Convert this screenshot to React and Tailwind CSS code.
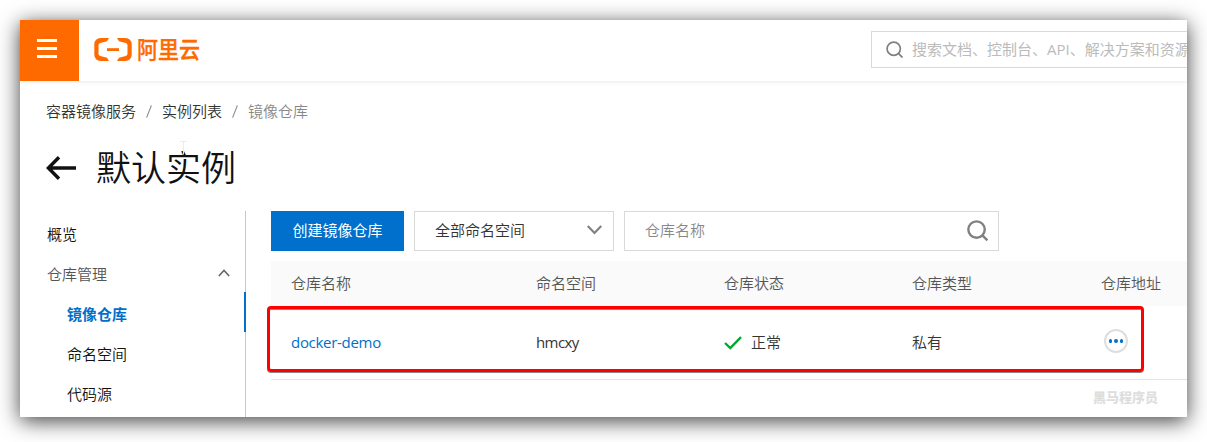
const Burger = () => (
  <svg width="20" height="19" viewBox="0 0 20 19" fill="#fff" shapeRendering="crispEdges">
    <rect width="20" height="3" />
    <rect y="8" width="20" height="3" />
    <rect y="16" width="20" height="3" />
  </svg>
);

const Logo = () => (
  <svg width="38" height="23" viewBox="0 0 38 23" fill="#ff6a00">
    <path d="M15 0H6.5A6.2 6.2 0 0 0 0.3 6.2V16.8A6.2 6.2 0 0 0 6.5 23H15L13 19.8L6.3 18A2.4 2.4 0 0 1 4.5 15.7V7.3A2.4 2.4 0 0 1 6.3 5L13 3.2Z" />
    <path d="M23 0H31.5A6.2 6.2 0 0 1 37.7 6.2V16.8A6.2 6.2 0 0 1 31.5 23H23L25 19.8L31.7 18A2.4 2.4 0 0 0 33.5 15.7V7.3A2.4 2.4 0 0 0 31.7 5L25 3.2Z" />
    <rect x="13" y="10.2" width="12" height="2.8" />
  </svg>
);

const Search = ({ className, w }) => (
  <svg className={className} viewBox="0 0 22 22" fill="none" stroke="#808080" strokeWidth={w}>
    <circle cx="10" cy="10" r="8.6" />
    <path d="M15.6 15.6L21.4 21.4" />
  </svg>
);

const Slash = () => (
  <span className="flex w-[26px] justify-center">
    <svg width="6" height="13" viewBox="0 0 6 13" stroke="#888" strokeWidth="1.1">
      <path d="M0.6 12.6L5.4 0.4" />
    </svg>
  </span>
);

const Side = ({ children, className }) => (
  <div className={`flex h-10 items-center pt-1 ${className}`}>{children}</div>
);

const cols = "grid grid-cols-[245px_188px_188px_189px_1fr] pl-5";

export default function App() {
  return (
    <div className="h-[442px] overflow-hidden bg-white p-5 font-['Open_Sans','Noto_Sans_CJK_SC',sans-serif] text-[15px] font-[350] text-[#333]">
      <div className="flex h-[397px] w-[1167px] flex-col bg-white shadow-[0_4px_20px_rgba(0,0,0,0.75)]">
        <header className="flex h-[61px] shrink-0 items-center overflow-hidden shadow-[0_1px_4px_rgba(0,0,0,0.09)]">
          <div className="flex h-[61px] w-[59px] items-center justify-center bg-[#ff6a00] pb-1 pr-[5px]">
            <Burger />
          </div>
          <div className="ml-[15px] flex items-center gap-[5px] pb-[3px]">
            <Logo />
            <span className="scale-y-110 text-[21px] font-medium leading-[23px] text-[#ff6a00] [-webkit-text-stroke:0.3px_#ff6a00]">阿里云</span>
          </div>
          <div className="mb-0.5 ml-auto flex h-[37px] w-[316px] shrink-0 items-center overflow-hidden whitespace-nowrap border border-r-0 border-[#d9d9d9] pl-3.5 font-normal text-[#bbb]">
            <Search className="mr-[9px] size-[17px] shrink-0" w={2.2} />
            搜索文档、控制台、API、解决方案和资源
          </div>
        </header>

        <nav className="ml-[26px] mt-[19px] flex h-[22px] shrink-0 items-center">
          <span>容器镜像服务</span>
          <Slash />
          <span>实例列表</span>
          <Slash />
          <span className="text-[#888]">镜像仓库</span>
        </nav>

        <div className="relative ml-[26px] mt-[21px] flex h-[50px] shrink-0 items-center text-[#111]">
          <svg className="mr-5" width="30" height="24" viewBox="0 0 30 24" fill="none" stroke="#111" strokeWidth="3.4">
            <path d="M2 12H30M13 1.2L2.4 12L13 22.8" />
          </svg>
          <h1 className="text-[35px] leading-[50px]">默认实例</h1>
          <svg className="absolute left-[134px] top-[-2px]" width="7" height="14" viewBox="0 0 7 14" fill="none" stroke="#ececec">
            <path d="M0 0.5H7M3.5 0.5V13.5" />
          </svg>
        </div>

        <div className="mt-[18px] flex min-h-0 flex-1">
          <aside className="w-[226px] shrink-0 border-r border-[#c8c8c8] pt-px text-[#111]">
            <Side className="pl-[27px]">概览</Side>
            <Side className="justify-between pl-[27px] pr-[15px] text-[#555]">
              仓库管理
              <svg className="mb-0.5" width="12" height="8" viewBox="0 0 12 8" fill="none" stroke="#666" strokeWidth="1.6">
                <path d="M0.8 7L6 1.4L11.2 7" />
              </svg>
            </Side>
            <Side className="-mr-px border-r-2 border-[#0070cc] pl-[47px] font-bold text-[#0070cc]">镜像仓库</Side>
            <Side className="pl-[47px]">命名空间</Side>
            <Side className="pl-[47px]">代码源</Side>
          </aside>

          <main className="ml-[25px] min-w-0 flex-1">
            <div className="flex h-10 gap-2.5">
              <button className="w-[133px] bg-[#0070cc] pb-0.5 font-normal text-white">创建镜像仓库</button>
              <div className="flex w-[200px] items-center justify-between border border-[#d9d9d9] pb-0.5 pl-5 pr-[11px]">
                全部命名空间
                <svg width="15" height="10" viewBox="0 0 15 10" fill="none" stroke="#808080" strokeWidth="2.2">
                  <path d="M0.7 1L7.5 8L14.3 1" />
                </svg>
              </div>
              <div className="flex w-[375px] items-center justify-between border border-[#d9d9d9] pb-0.5 pl-5 pr-2.5 text-[#888]">
                仓库名称
                <Search className="size-[21px]" w={2.5} />
              </div>
            </div>

            <div className={`mt-2.5 h-[45px] items-center bg-[#fafafa] text-[#555] ${cols}`}>
              <span>仓库名称</span>
              <span>命名空间</span>
              <span>仓库状态</span>
              <span>仓库类型</span>
              <span>仓库地址</span>
            </div>

            <div className={`relative h-[74px] items-center border-b border-[#e5e5e5] ${cols}`}>
              <span className="font-normal tracking-[-0.3px] text-[#0070cc]">docker-demo</span>
              <span className="font-normal tracking-[-0.6px]">hmcxy</span>
              <span className="flex items-center">
                <svg className="mr-[9px]" width="18" height="14" viewBox="0 0 18 14" fill="none" stroke="#00a82d" strokeWidth="2.4">
                  <path d="M1 7L6.3 12L17 1.2" />
                </svg>
                正常
              </span>
              <span>私有</span>
              <span className="mb-[3px] ml-[3px] flex size-6 items-center justify-center gap-0.5 rounded-full border-2 border-[#dedede]">
                <i className="size-[3.6px] rounded-full bg-[#0070cc]" />
                <i className="size-[3.6px] rounded-full bg-[#0070cc]" />
                <i className="size-[3.6px] rounded-full bg-[#0070cc]" />
              </span>
              <div className="absolute -left-1 top-0 h-[66px] w-[877px] rounded-[4px] border-[3px] border-[#f00] shadow-[0_1px_0_#888,inset_0_1px_0_#888]" />
            </div>
            <div className="mt-[7px] pr-[29px] text-right text-[13px] font-black leading-5 text-[#dedede]">黑马程序员</div>
          </main>
        </div>
      </div>
    </div>
  );
}
